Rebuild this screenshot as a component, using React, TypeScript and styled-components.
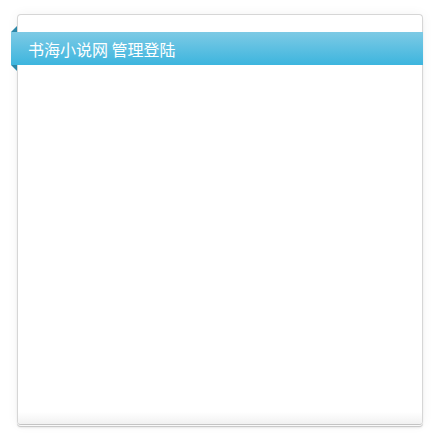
import React from "react";
import styled, { createGlobalStyle } from "styled-components";

const Global = createGlobalStyle`
  html, body { margin: 0; padding: 0; background: #fff; }
  body { font-family: "Noto Sans CJK SC", "Noto Sans", sans-serif; }
`;

const Page = styled.div`
  width: 440px;
  height: 440px;
  padding: 14px 0 0 17px;
  box-sizing: border-box;
`;

const Panel = styled.div`
  position: relative;
  width: 406px;
  height: 411px;
  box-sizing: border-box;
  border: 1px solid #d6d6d6;
  border-bottom-color: #c4c4c4;
  border-radius: 4px;
  background: #fff;
  display: flex;
  flex-direction: column;
  box-shadow: 0 1px 0 #fafafa, 0 2px 0 #c9c9c9, 0 3px 2px rgba(0,0,0,0.08), 0 0 12px rgba(0,0,0,0.05);
`;

const Ribbon = styled.div`
  position: relative;
  margin: 17px -1px 0 -7px;
  height: 33px;
  display: flex;
  align-items: center;
  padding-left: 17px;
  background: linear-gradient(to bottom, #7dcae5, #3db5de);
  color: #fff;
  font-size: 16px;
  letter-spacing: 0;
`;

const Fold = styled.span<{ $bottom?: boolean }>`
  position: absolute;
  left: 0;
  width: 0;
  height: 0;
  border-style: solid;
  ${(p) =>
    p.$bottom
      ? `top: 100%; border-width: 0 6px 6px 0; border-color: transparent #2b87a8 transparent transparent;`
      : `bottom: 100%; border-width: 0 0 6px 6px; border-color: transparent transparent #2b87a8 transparent;`}
`;

const Body = styled.div`
  flex: 1;
`;

const Footer = styled.div`
  height: 12px;
  border-radius: 0 0 4px 4px;
  background: linear-gradient(to bottom, #ffffff, #f1f1f1);
`;

export default function App() {
  return (
    <>
      <Global />
      <Page>
        <Panel>
          <Ribbon>
            <Fold />
            书海小说网 管理登陆
            <Fold $bottom />
          </Ribbon>
          <Body />
          <Footer />
        </Panel>
      </Page>
    </>
  );
}
